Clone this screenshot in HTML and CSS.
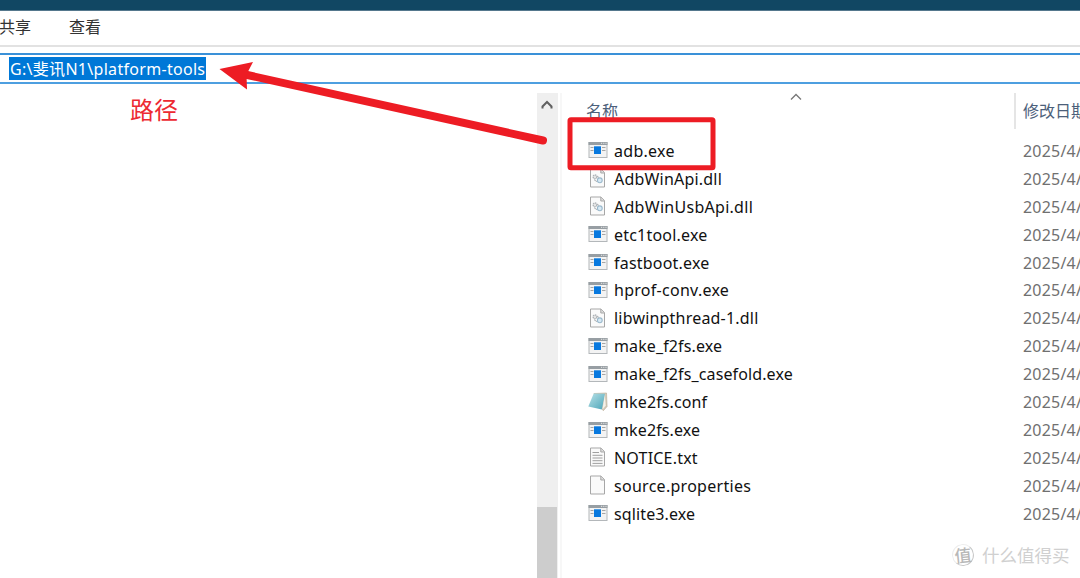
FILE: index.html
```html
<!DOCTYPE html>
<html lang="zh-CN">
<head>
<meta charset="utf-8">
<title>platform-tools</title>
<link rel="stylesheet" href="styles.css">
</head>
<body>
<svg class="defs" width="0" height="0">
  <defs>
    <linearGradient id="teal" x1="0" y1="0" x2="1" y2="1"><stop offset="0" stop-color="#b9e2e8"/><stop offset="1" stop-color="#4ba5b8"/></linearGradient>
    <symbol id="exe" viewBox="0 0 20 20">
      <rect x="1" y="2.500" width="18" height="15" fill="#f3f3f3" stroke="#b3b7ba"/>
      <path d="M.5 2h19v3H.5z" fill="#979ea3"/><path d="M13 3.300h1.200m1 0h1.200m1 0h1.200" stroke="#e8e8e8"/>
      <path d="M2.500 7.500h3m-3 3h3m8.500-3h3.500m-3.500 3h3.500" stroke="#a6a6a6"/>
      <rect x="6" y="6.300" width="7" height="7.700" fill="#0879df"/>
    </symbol>
    <symbol id="page" viewBox="0 0 20 20">
      <path d="M2.500 1h10.500l3.500 3.500v14.500h-14z" fill="#fafafa" stroke="#a7a7a7"/>
      <path d="M12.800 1v4h3.700" fill="#ddd" stroke="#a7a7a7"/>
    </symbol>
    <symbol id="dll" viewBox="0 0 20 20">
      <use href="#page"/>
      <circle cx="7" cy="8.800" r="1.900" fill="#e5e5e5" stroke="#acb1b5" stroke-width="1.300" stroke-dasharray="1.400 .6"/>
      <circle cx="11.800" cy="12.300" r="2.400" fill="#d7e9f5" stroke="#9bb9cc" stroke-width="1.100"/>
      <path d="M6 11.700l3 2M9 8l2 1.500" stroke="#acb1b5"/>
    </symbol>
    <symbol id="txt" viewBox="0 0 20 20">
      <use href="#page"/>
      <path d="M4.500 5.500h6.500M4.500 8.300h10M4.500 11h10M4.500 13.700h10M4.500 16.400h10" stroke="#a0a0a0"/>
    </symbol>
    <symbol id="conf" viewBox="0 0 20 20">
      <path d="M6 1.500L18.500 1l.6 13.500-3.800 4.200L14 17z" fill="#d5cbb9" stroke="#b5a994" stroke-width=".6"/>
      <path d="M5.700 1.400L17 1.800l-3.200 15.800L.3 14.600z" fill="url(#teal)"/>
      <path d="M16.800 3l-2.300 14.500 3.200-4z" fill="#f5f1e9"/>
    </symbol>
  </defs>
</svg>
<div class="window">
  <div class="titlebar"></div>
  <nav class="tabs"><span>共享</span><span>查看</span></nav>
  <div class="address"><span class="path">G:\斐讯N1\platform-tools</span></div>
  <div class="main">
    <aside class="tree"><span class="note">路径</span></aside>
    <div class="scroll">
      <svg class="up" viewBox="0 0 12 10"><path d="M1.500 8.500V6.500L6 2l4.500 4.500v2" fill="none" stroke="#606060" stroke-width="2"/></svg>
      <div class="thumb"></div>
    </div>
    <section class="files">
      <header class="head">
        <span class="name-head">名称</span>
        <svg class="sort" viewBox="0 0 12 8"><path d="M1 6.500L6 1.500l5 5" fill="none" stroke="#777" stroke-width="1.300"/></svg>
        <span class="date-head">修改日期</span>
      </header>
      <div class="list">
        <div class="row"><svg><use href="#exe"/></svg><span class="name wide">adb.exe</span><time>2025/4/</time></div>
        <div class="row"><svg><use href="#dll"/></svg><span class="name">AdbWinApi.dll</span><time>2025/4/</time></div>
        <div class="row"><svg><use href="#dll"/></svg><span class="name wide">AdbWinUsbApi.dll</span><time>2025/4/</time></div>
        <div class="row"><svg><use href="#exe"/></svg><span class="name">etc1tool.exe</span><time>2025/4/</time></div>
        <div class="row"><svg><use href="#exe"/></svg><span class="name">fastboot.exe</span><time>2025/4/</time></div>
        <div class="row"><svg><use href="#exe"/></svg><span class="name wide">hprof-conv.exe</span><time>2025/4/</time></div>
        <div class="row"><svg><use href="#dll"/></svg><span class="name">libwinpthread-1.dll</span><time>2025/4/</time></div>
        <div class="row"><svg><use href="#exe"/></svg><span class="name tight">make_f2fs.exe</span><time>2025/4/</time></div>
        <div class="row"><svg><use href="#exe"/></svg><span class="name tight">make_f2fs_casefold.exe</span><time>2025/4/</time></div>
        <div class="row"><svg><use href="#conf"/></svg><span class="name tight">mke2fs.conf</span><time>2025/4/</time></div>
        <div class="row"><svg><use href="#exe"/></svg><span class="name tight">mke2fs.exe</span><time>2025/4/</time></div>
        <div class="row"><svg><use href="#txt"/></svg><span class="name">NOTICE.txt</span><time>2025/4/</time></div>
        <div class="row"><svg><use href="#page"/></svg><span class="name wide">source.properties</span><time>2025/4/</time></div>
        <div class="row"><svg><use href="#exe"/></svg><span class="name tight">sqlite3.exe</span><time>2025/4/</time></div>
      </div>
    </section>
  </div>
  <svg class="marks" viewBox="0 0 1080 578">
    <path d="M245 74.500L543 140.500" stroke="#ed1c24" stroke-width="8" stroke-linecap="round"/>
    <path d="M219.500 69L253 62l-6.500 12.500L247 89.500z" fill="#ed1c24"/>
    <rect x="570" y="119.700" width="143" height="48" rx="1" fill="none" stroke="#ed1c24" stroke-width="5"/>
  </svg>
  <div class="watermark"><span class="logo">值</span><span>什么值得买</span></div>
</div>
</body>
</html>
```
FILE: styles.css
```css
* { box-sizing: border-box; }
body { margin: 0; background: #fff; font-family: "Noto Sans", "Noto Sans CJK SC", sans-serif; font-size: 16px; }
.defs { position: absolute; }
.window { position: relative; width: 1080px; height: 578px; overflow: hidden; display: flex; flex-direction: column; }
.titlebar { height: 11px; background: #114763; border-bottom: 1px solid #55788d; flex: none; }
.tabs { height: 36px; flex: none; display: flex; gap: 38px; line-height: 31px; color: #333; border-bottom: 2px solid #e2e2e2; font-family: "Noto Sans CJK SC", sans-serif; margin-left: -1px; }
.address { height: 31px; flex: none; margin-top: 6px; border-top: 2px solid #3a91d8; border-bottom: 2px solid #4d9fe0; display: flex; align-items: center; padding-left: 9px; }
.path { height: 23px; width: 197px; line-height: 24px; padding-left: 1px; background: #0078d7; color: #fff; white-space: nowrap; letter-spacing: .3px; }
.main { flex: 1; display: flex; padding-top: 9px; min-height: 0; }
.tree { width: 537px; flex: none; padding-left: 130px; }
.note { display: block; line-height: 32px; font-size: 24px; color: #ed2a32; font-family: "Noto Sans CJK SC", sans-serif; }
.scroll { width: 21px; background: #efefef; flex: none; display: flex; flex-direction: column; justify-content: space-between; align-items: flex-start; padding-top: 7px; }
.up { width: 12px; height: 10px; margin-left: 4px; }
.thumb { width: 20px; height: 71px; background: #cdcdcd; }
.files { flex: 1; margin-left: 2px; border-left: 2px solid #f7f7f7; min-width: 0; overflow: hidden; }
.head { height: 36px; display: flex; color: #4c607a; font-family: "Noto Sans CJK SC", sans-serif; line-height: 35px; white-space: nowrap; }
.name-head { width: 228px; padding-left: 24px; flex: none; }
.sort { width: 12px; height: 8px; flex: none; }
.date-head { margin-left: 212px; padding-left: 7px; border-left: 2px solid #e5e5e5; flex: none; }
.list { padding: 8px 0 0 26px; }
.row { height: 27.92px; display: flex; align-items: center; white-space: nowrap; }
.row svg { width: 20px; height: 20px; flex: none; margin-top: -1px; }
.name { width: 415px; padding-left: 6px; flex: none; color: #111; letter-spacing: .2px; }
.wide { letter-spacing: .28px; }
.tight { letter-spacing: .12px; }
time { color: #707070; flex: none; letter-spacing: .2px; }
.marks { position: absolute; left: 0; top: 0; width: 1080px; height: 578px; fill: none; }
.watermark { position: absolute; left: 952px; top: 543px; height: 24px; display: flex; align-items: center; gap: 8px; color: #d0d0d0; font: 17.5px/24px "Noto Sans CJK SC", sans-serif; white-space: nowrap; }
.logo { width: 22px; height: 22px; line-height: 20px; text-align: center; border-radius: 50%; border: 1px solid #eee; border-right-color: #c8c8c8; border-bottom-color: #c8c8c8; font-size: 17px; font-weight: 500; color: #b8b8b8; transform: rotate(-6deg); }
```
